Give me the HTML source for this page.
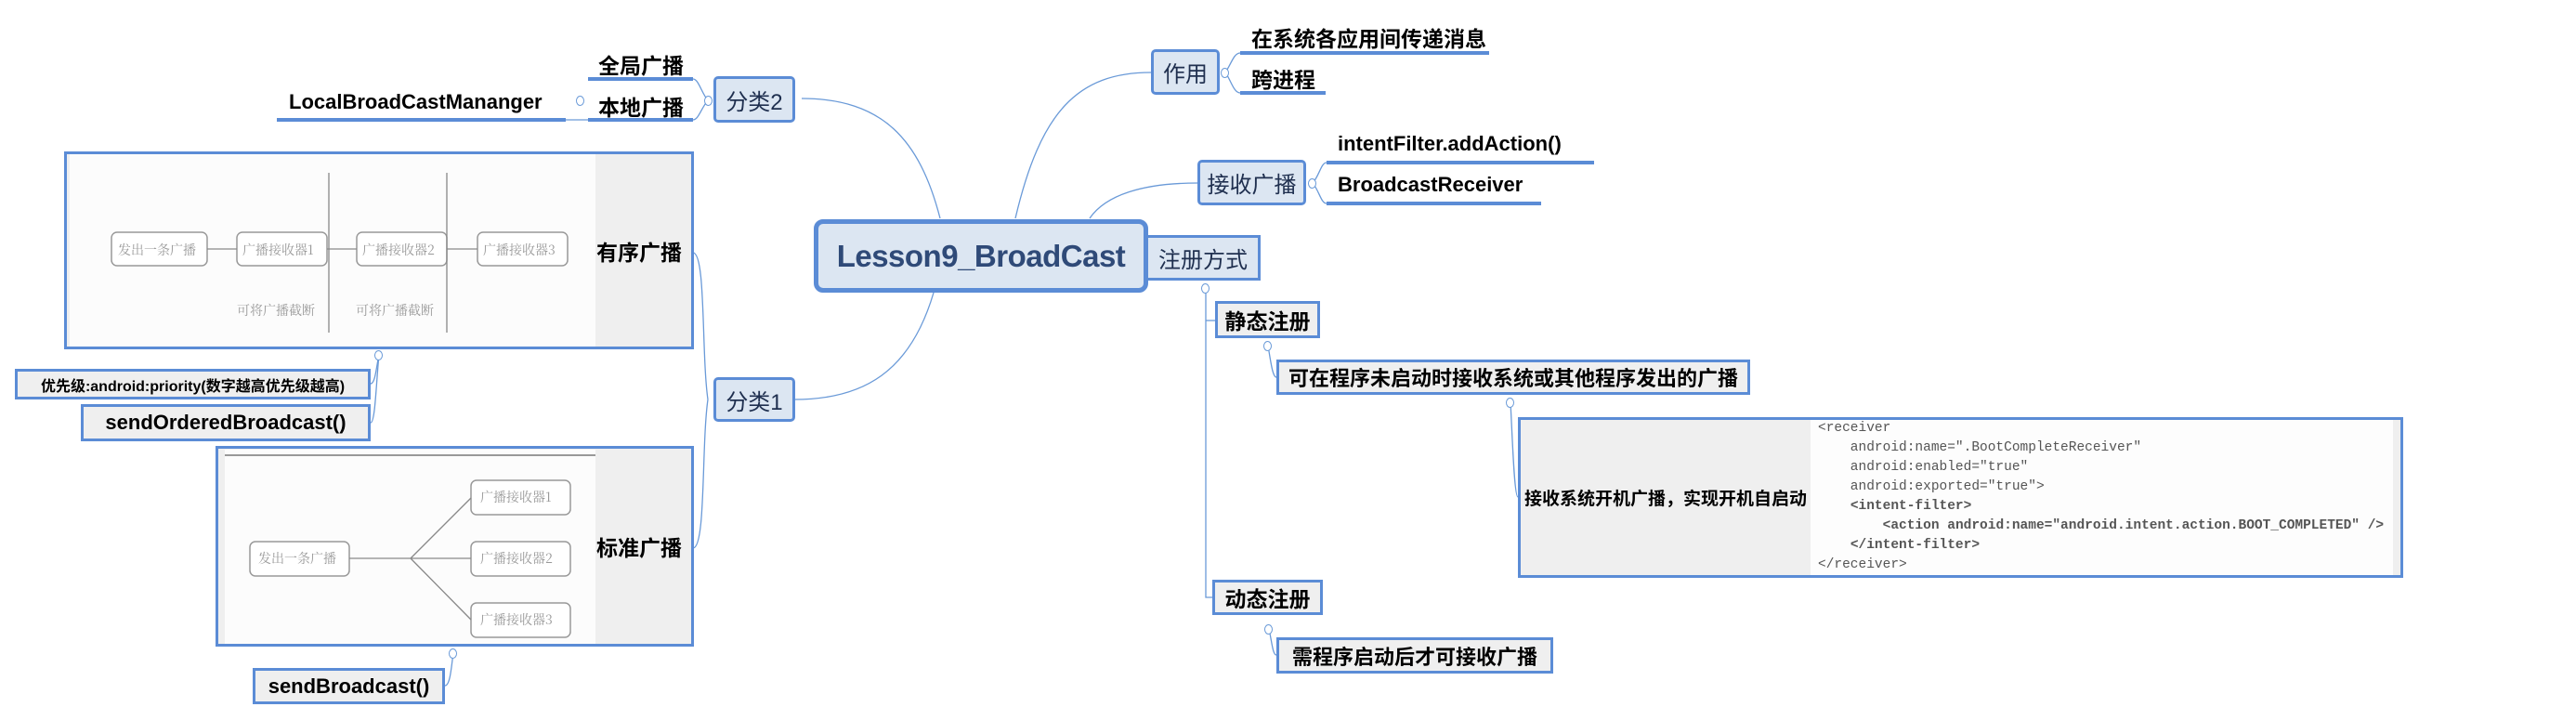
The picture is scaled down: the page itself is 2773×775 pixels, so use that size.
<!DOCTYPE html>
<html><head><meta charset="utf-8">
<style>
*{margin:0;padding:0;box-sizing:border-box}
body{width:2773px;height:775px;background:#fff;position:relative;overflow:hidden;font-family:"Liberation Sans","Noto Sans CJK SC",sans-serif}
.a{position:absolute}
.n{position:absolute;background:#dce6f2;border:3px solid #5b8cd6;border-radius:5px;color:#1f2f4f;font-size:24px;display:flex;align-items:center;justify-content:center;white-space:nowrap}
.b{position:absolute;background:#efefef;border:3px solid #5b8cd6;font-weight:bold;font-size:23px;display:flex;align-items:center;justify-content:center;color:#000;white-space:nowrap}
.t{position:absolute;font-weight:bold;font-size:23px;color:#000;white-space:nowrap}
.u{position:absolute;height:4px;background:#5b8cd6}
.c{position:absolute;width:9px;height:11px;border:1px solid #6a9ad8;border-radius:50%;background:#fff}
.code{position:absolute;font-family:"Liberation Mono",monospace;font-size:14.5px;color:#555;white-space:pre;line-height:21px}
</style></head><body>
<svg class="a" style="left:0;top:0" width="2773" height="775" fill="none" stroke="#6a9ad8" stroke-width="1.3">
<path d="M1012 235 C990 150 950 106 863 106"/>
<path d="M1093 235 C1120 120 1160 78 1239 78"/>
<path d="M1173 235 C1190 210 1230 197 1289 197"/>
<path d="M1005 315 C980 400 930 430 855 430"/>
<path d="M762 430 C755 380 760 272 746 272"/>
<path d="M762 430 C755 480 760 590 746 590"/>
<path d="M762 108 C755 100 752 85 746 85"/>
<path d="M762 108 C755 116 752 129 746 129"/>
<path d="M609 129 L633 129"/>
<path d="M1319 78 C1325 70 1328 57 1335 57"/>
<path d="M1319 78 C1325 86 1328 100 1335 100"/>
<path d="M1413 197 C1420 190 1422 175 1428 175"/>
<path d="M1413 197 C1420 205 1422 219 1428 219"/>
<path d="M1298 310 L1298 643 L1305 643"/>
<path d="M1298 345 L1308 345"/>
<path d="M1365 372 C1368 390 1370 406 1374 406"/>
<path d="M1366 677 C1369 690 1370 705 1374 705"/>
<path d="M1626 433 C1628 470 1630 535 1634 535"/>
<path d="M408 382 C405 395 404 413 399 413"/>
<path d="M408 382 C405 410 404 455 399 455"/>
<path d="M488 703 C486 715 485 738 479 738"/>
</svg>

<div class="n" style="left:876px;top:236px;width:360px;height:79px;border-width:5px;border-radius:10px;font-size:33px;color:#2f4a78;font-weight:bold;letter-spacing:-0.5px">Lesson9_BroadCast</div>
<div class="n" style="left:768px;top:82px;width:88px;height:50px">分类2</div>
<div class="n" style="left:768px;top:406px;width:88px;height:48px">分类1</div>
<div class="n" style="left:1239px;top:53px;width:74px;height:49px">作用</div>
<div class="n" style="left:1289px;top:172px;width:117px;height:49px">接收广播</div>
<div class="n" style="left:1236px;top:253px;width:121px;height:49px;border-left:none;border-radius:0">注册方式</div>

<div class="t" style="left:644px;top:52px">全局广播</div><div class="u" style="left:633px;top:83px;width:113px"></div>
<div class="t" style="left:644px;top:97px">本地广播</div><div class="u" style="left:633px;top:127px;width:113px"></div>
<div class="t" style="left:311px;top:97px;font-size:22px">LocalBroadCastMananger</div><div class="u" style="left:298px;top:127px;width:311px"></div>
<div class="c" style="left:620px;top:103px"></div><div class="c" style="left:758px;top:103px"></div>

<div class="t" style="left:1347px;top:23px">在系统各应用间传递消息</div><div class="u" style="left:1335px;top:55px;width:268px"></div>
<div class="t" style="left:1347px;top:67px">跨进程</div><div class="u" style="left:1335px;top:98px;width:92px"></div>
<div class="c" style="left:1314px;top:73px"></div>
<div class="t" style="left:1440px;top:142px;font-size:22px">intentFilter.addAction()</div><div class="u" style="left:1428px;top:173px;width:288px"></div>
<div class="t" style="left:1440px;top:186px;font-size:22px">BroadcastReceiver</div><div class="u" style="left:1428px;top:217px;width:231px"></div>
<div class="c" style="left:1408px;top:192px"></div>

<div class="c" style="left:1293px;top:305px"></div>
<div class="b" style="left:1308px;top:324px;width:113px;height:40px">静态注册</div>
<div class="c" style="left:1360px;top:367px"></div>
<div class="b" style="left:1374px;top:387px;width:510px;height:38px;font-size:22px">可在程序未启动时接收系统或其他程序发出的广播</div>
<div class="c" style="left:1621px;top:428px"></div>
<div class="b" style="left:1634px;top:449px;width:953px;height:173px;justify-content:flex-start">
 <div style="width:312px;height:100%;display:flex;align-items:center;justify-content:center;font-size:19px;white-space:nowrap">接收系统开机广播，实现开机自启动</div>
 <div style="position:absolute;left:312px;top:0;width:627px;height:167px;background:#fdfdfd"></div>
</div>
<div class="code" style="left:1957px;top:451px">&lt;receiver
    android:name=".BootCompleteReceiver"
    android:enabled="true"
    android:exported="true"&gt;
    <b>&lt;intent-filter&gt;</b>
        <b>&lt;action android:name="android.intent.action.BOOT_COMPLETED" /&gt;</b>
    <b>&lt;/intent-filter&gt;</b>
&lt;/receiver&gt;</div>
<div class="b" style="left:1305px;top:624px;width:119px;height:38px">动态注册</div>
<div class="c" style="left:1361px;top:672px"></div>
<div class="b" style="left:1374px;top:686px;width:298px;height:39px;font-size:22px">需程序启动后才可接收广播</div>

<!-- ordered -->
<div class="b" style="left:69px;top:163px;width:678px;height:213px;justify-content:flex-end;padding-right:10px;font-size:23px">有序广播</div>
<svg class="a" style="left:75px;top:166px" width="566" height="207">
<rect width="566" height="207" fill="#fcfcfc"/>
<g fill="#fff" stroke="#999" stroke-width="1.5">
<rect x="45" y="84" width="103" height="36" rx="6"/><rect x="180" y="84" width="97" height="36" rx="6"/><rect x="309" y="84" width="97" height="36" rx="6"/><rect x="439" y="84" width="97" height="36" rx="6"/></g>
<g stroke="#888" stroke-width="1.3"><path d="M148 102H180M277 102H309M406 102H439"/><path d="M279 20V192M406 20V192"/></g>
<g font-family="Noto Serif CJK SC,serif" font-size="14" fill="#999">
<text x="52" y="108">发出一条广播</text><text x="186" y="108">广播接收器1</text><text x="315" y="108">广播接收器2</text><text x="445" y="108">广播接收器3</text>
<text x="180" y="173">可将广播截断</text><text x="308" y="173">可将广播截断</text></g>
</svg>
<div class="c" style="left:403px;top:377px"></div>
<div class="b" style="left:16px;top:397px;width:383px;height:33px;font-size:16px">优先级:android:priority(数字越高优先级越高)</div>
<div class="b" style="left:87px;top:435px;width:312px;height:40px;font-size:22px">sendOrderedBroadcast()</div>

<!-- standard -->
<div class="b" style="left:232px;top:480px;width:515px;height:216px;justify-content:flex-end;padding-right:10px">标准广播</div>
<svg class="a" style="left:242px;top:484px" width="399" height="209">
<rect width="399" height="209" fill="#fcfcfc"/>
<path d="M0 6H399" stroke="#999" stroke-width="2"/>
<g fill="#fff" stroke="#999" stroke-width="1.5">
<rect x="27" y="99" width="107" height="37" rx="6"/><rect x="265" y="33" width="107" height="37" rx="6"/><rect x="265" y="99" width="107" height="37" rx="6"/><rect x="265" y="165" width="107" height="37" rx="6"/></g>
<g stroke="#888" stroke-width="1.3"><path d="M134 117H265M200 117L265 52M200 117L265 183"/></g>
<g font-family="Noto Serif CJK SC,serif" font-size="14" fill="#999">
<text x="36" y="122">发出一条广播</text><text x="275" y="56">广播接收器1</text><text x="275" y="122">广播接收器2</text><text x="275" y="188">广播接收器3</text></g>
</svg>
<div class="c" style="left:483px;top:698px"></div>
<div class="b" style="left:272px;top:719px;width:207px;height:39px;font-size:22px">sendBroadcast()</div>
</body></html>
